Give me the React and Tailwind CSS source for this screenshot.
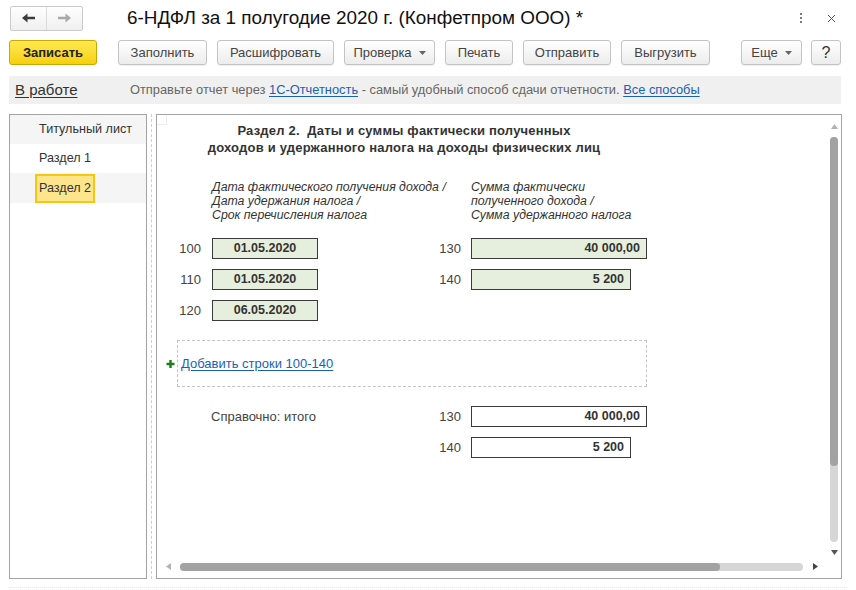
import React from 'react';

const FONT = { fontFamily: '"Liberation Sans", Arial, sans-serif' };

function Caret() {
  return (
    <svg width="7" height="4" viewBox="0 0 7 4" className="ml-[7px] mt-[1px]">
      <path d="M0 0 H7 L3.5 4 Z" fill="#666" />
    </svg>
  );
}

function ToolButton({ width, children, caret }) {
  return (
    <button
      className="h-[25px] flex items-center justify-center rounded-[3px] border border-[#c4c4c4] bg-gradient-to-b from-white to-[#ececec] text-[13px] text-[#444] shadow-[0_1px_0_rgba(0,0,0,0.06)]"
      style={{ width }}
    >
      {children}
      {caret && <Caret />}
    </button>
  );
}

function Field({ width, value, align = 'center', filled = true }) {
  return (
    <div
      className={`h-[21px] border border-[#3a3a3a] flex items-center px-[6px] text-[12.5px] font-bold text-[#333] ${filled ? 'bg-[#e6efdd]' : 'bg-white'} ${align === 'right' ? 'justify-end' : 'justify-center'}`}
      style={{ width }}
    >
      {value}
    </div>
  );
}

function Tri({ dir, color }) {
  const d = {
    up: 'M0 5 L3.5 0 L7 5 Z',
    down: 'M0 0 H7 L3.5 5 Z',
    left: 'M5 0 V7 L0 3.5 Z',
    right: 'M0 0 V7 L5 3.5 Z',
  }[dir];
  const vertical = dir === 'up' || dir === 'down';
  return (
    <svg width={vertical ? 7 : 5} height={vertical ? 5 : 7} viewBox={vertical ? '0 0 7 5' : '0 0 5 7'}>
      <path d={d} fill={color} />
    </svg>
  );
}

const leftRows = [
  { label: '100', date: '01.05.2020', code: '130', sum: '40 000,00', sumWidth: 176 },
  { label: '110', date: '01.05.2020', code: '140', sum: '5 200', sumWidth: 160 },
  { label: '120', date: '06.05.2020' },
];

export default function App() {
  return (
    <div className="w-[856px] h-[590px] bg-white overflow-hidden text-[#333]" style={FONT}>
      {/* header */}
      <div className="h-[36px] flex items-center">
        <div className="ml-[10px] h-[25px] w-[73px] flex rounded-[2px] border border-[#cbcbcb] bg-gradient-to-b from-white to-[#efefef]">
          <div className="w-[36px] flex items-center justify-center border-r border-[#dcdcdc]">
            <svg width="13" height="10" viewBox="0 0 13 10">
              <path d="M0 5 L5.5 0.5 V3.8 H13 V6.2 H5.5 V9.5 Z" fill="#3c3c3c" />
            </svg>
          </div>
          <div className="flex-1 flex items-center justify-center">
            <svg width="13" height="10" viewBox="0 0 13 10">
              <path d="M13 5 L7.5 0.5 V3.8 H0 V6.2 H7.5 V9.5 Z" fill="#a9a9a9" />
            </svg>
          </div>
        </div>
        <div className="ml-[44px] text-[18.9px] leading-[24px] text-[#111]">
          6-НДФЛ за 1 полугодие 2020 г. (Конфетпром ООО) *
        </div>
        <div className="ml-auto mr-[20px] flex items-center gap-[25px]">
          <div className="flex flex-col gap-[2px] mt-[-1px]">
            <span className="w-[2px] h-[2px] bg-[#7a7a7a]" />
            <span className="w-[2px] h-[2px] bg-[#7a7a7a]" />
            <span className="w-[2px] h-[2px] bg-[#7a7a7a]" />
          </div>
          <svg width="9" height="9" viewBox="0 0 9 9">
            <path d="M1 1 L8 8 M8 1 L1 8" stroke="#555" strokeWidth="1" />
          </svg>
        </div>
      </div>

      {/* toolbar */}
      <div className="mt-[4px] h-[25px] flex items-center pl-[9px]">
        <button className="w-[88px] h-[25px] rounded-[3px] border border-[#c9a900] bg-gradient-to-b from-[#ffe94d] to-[#f6d000] text-[13px] font-bold text-[#222]">
          Записать
        </button>
        <div className="ml-[21px] flex items-center gap-[10px]">
          <ToolButton width={89}>Заполнить</ToolButton>
          <ToolButton width={117}>Расшифровать</ToolButton>
          <ToolButton width={91} caret>Проверка</ToolButton>
          <ToolButton width={68}>Печать</ToolButton>
          <ToolButton width={88}>Отправить</ToolButton>
          <ToolButton width={89}>Выгрузить</ToolButton>
        </div>
        <div className="ml-[31px] flex items-center gap-[9px]">
          <ToolButton width={61} caret>Еще</ToolButton>
          <ToolButton width={30}>
            <span className="text-[16px] text-[#333]">?</span>
          </ToolButton>
        </div>
      </div>

      {/* info bar */}
      <div className="mt-[11px] ml-[9px] w-[832px] h-[28px] bg-[#f0f0f0] flex items-center text-[12.85px]">
        <span className="ml-[6px] w-[115px] shrink-0 text-[15px]">
          <span className="underline text-[#333] underline-offset-2">В работе</span>
        </span>
        <span className="text-[#666]">
          Отправьте отчет через{' '}
          <span className="text-[#1b5fb7] underline underline-offset-2">1С-Отчетность</span>
          {' '}- самый удобный способ сдачи отчетности.{' '}
          <span className="text-[#1b5fb7] underline underline-offset-2">Все способы</span>
        </span>
      </div>

      {/* body */}
      <div className="mt-[10px] h-[465px] flex pl-[9px]">
        {/* left nav */}
        <div className="w-[138px] border border-[#a3a3a3] text-[12.6px] text-[#333]">
          <div className="h-[29px] bg-[#f5f5f5] flex items-center pl-[29px]">Титульный лист</div>
          <div className="h-[29px] flex items-center pl-[29px]">Раздел 1</div>
          <div className="h-[30px] bg-[#f5f5f5] flex items-center pl-[25px]">
            <span className="h-[29px] flex items-center px-[2px] border-2 border-[#f7c612] bg-[#fde58c]">Раздел 2</span>
          </div>
        </div>

        {/* splitter */}
        <div className="w-[9px] flex justify-center">
          <div className="h-full border-l border-dashed border-[#cfcfcf]" />
        </div>

        {/* main panel */}
        <div className="w-[686px] border border-[#a3a3a3] flex flex-col">
          <div className="flex-1 flex min-h-0">
            <div className="flex-1 relative">
              <div className="absolute left-0 top-0 w-[10px] h-[10px] border-r border-b border-[#ececec]" />
              <div className="w-[494px]">
                <div className="pt-[7px] text-center text-[13px] leading-[17px] font-bold text-[#333] tracking-[0.2px]">
                  <div>Раздел 2.&nbsp; Даты и суммы фактически полученных</div>
                  <div>доходов и удержанного налога на доходы физических лиц</div>
                </div>

                <div className="mt-[24px] flex text-[12.3px] leading-[14px] italic text-[#333]">
                  <div className="ml-[55px] w-[259px]">
                    <div>Дата фактического получения дохода /</div>
                    <div>Дата удержания налога /</div>
                    <div>Срок перечисления налога</div>
                  </div>
                  <div>
                    <div>Сумма фактически</div>
                    <div>полученного дохода /</div>
                    <div>Сумма удержанного налога</div>
                  </div>
                </div>

                <div className="mt-[16px] flex flex-col gap-[10px]">
                  {leftRows.map((r) => (
                    <div key={r.label} className="flex items-center h-[21px] text-[13px] text-[#444]">
                      <div className="w-[55px] text-right pr-[11px]">{r.label}</div>
                      <Field width={106} value={r.date} />
                      {r.code && (
                        <>
                          <div className="w-[153px] text-right pr-[10px]">{r.code}</div>
                          <Field width={r.sumWidth} value={r.sum} align="right" />
                        </>
                      )}
                    </div>
                  ))}
                </div>

                <div className="mt-[19px] ml-[9px] flex items-center">
                  <svg width="11" height="10" viewBox="0 0 11 10" className="mt-[1px]">
                    <path d="M0.5 5 H8.5 M4.5 1 V9" stroke="#178017" strokeWidth="2.4" />
                  </svg>
                  <div className="w-[470px] h-[47px] border border-dashed border-[#c4c4c4] flex items-center pl-[3px]">
                    <span className="text-[13px] text-[#1b5fb7] underline underline-offset-2">Добавить строки 100-140</span>
                  </div>
                </div>

                <div className="mt-[19px] flex flex-col gap-[10px] text-[13px] text-[#444]">
                  <div className="flex items-center h-[21px]">
                    <div className="w-[54px]" />
                    <div className="w-[107px]">Справочно: итого</div>
                    <div className="w-[153px] text-right pr-[10px]">130</div>
                    <Field width={176} value="40 000,00" align="right" filled={false} />
                  </div>
                  <div className="flex items-center h-[21px]">
                    <div className="w-[161px]" />
                    <div className="w-[153px] text-right pr-[10px]">140</div>
                    <Field width={160} value="5 200" align="right" filled={false} />
                  </div>
                </div>
              </div>
            </div>

            {/* vertical scrollbar */}
            <div className="w-[16px] mr-[-1px] flex flex-col items-center pt-[9px] pb-[4px]">
              <Tri dir="up" color="#b3b3b3" />
              <div className="mt-[8px] flex-1 w-[8px] rounded-full bg-[#d6d6d6] flex flex-col">
                <div className="h-[329px] rounded-full bg-[#a2a2a2]" />
              </div>
              <div className="mt-[8px]">
                <Tri dir="down" color="#555" />
              </div>
            </div>
          </div>

          {/* horizontal scrollbar */}
          <div className="h-[19px] flex items-center pl-[9px] pb-[4px]">
            <Tri dir="left" color="#b3b3b3" />
            <div className="ml-[9px] w-[623px] h-[8px] rounded-full bg-[#d6d6d6] flex">
              <div className="w-[540px] rounded-full bg-[#a2a2a2]" />
            </div>
            <div className="ml-[10px]">
              <Tri dir="right" color="#444" />
            </div>
          </div>
        </div>
      </div>

      <div className="mt-[8px] mx-[9px] border-t border-dotted border-[#e6e6e6]" />
    </div>
  );
}
